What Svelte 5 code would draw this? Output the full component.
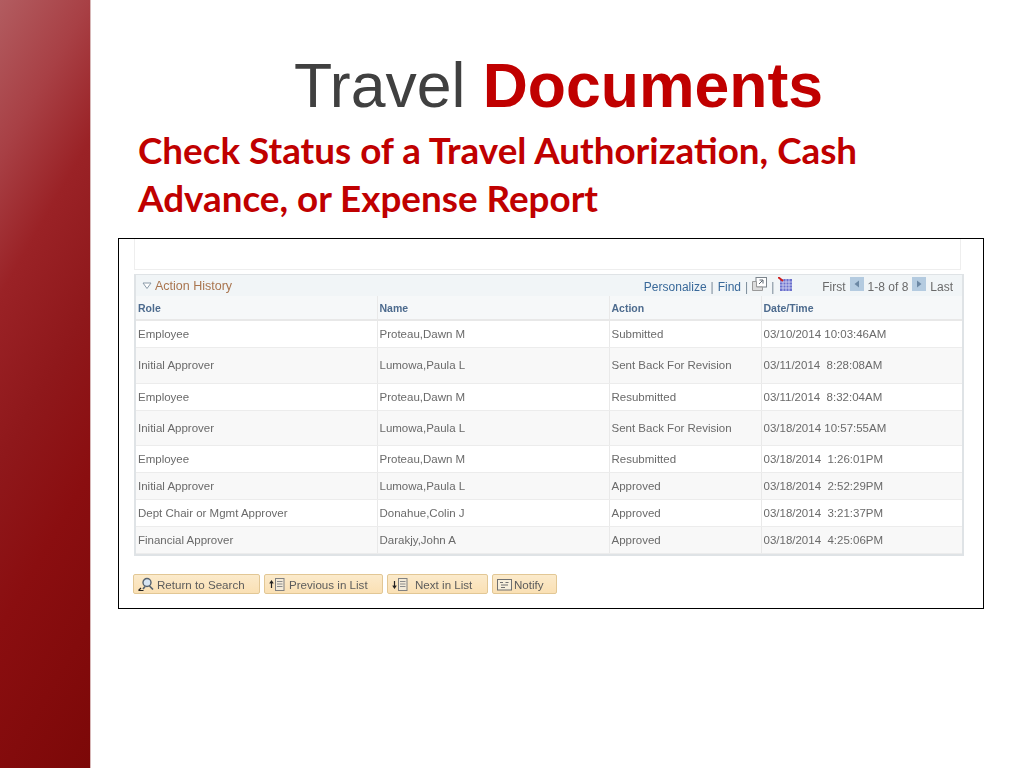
<script>
	const rows = [
		{ role: 'Employee', name: 'Proteau,Dawn M', action: 'Submitted', date: '03/10/2014 10:03:46AM', size: '' },
		{ role: 'Initial Approver', name: 'Lumowa,Paula L', action: 'Sent Back For Revision', date: '03/11/2014  8:28:08AM', size: 'tall' },
		{ role: 'Employee', name: 'Proteau,Dawn M', action: 'Resubmitted', date: '03/11/2014  8:32:04AM', size: '' },
		{ role: 'Initial Approver', name: 'Lumowa,Paula L', action: 'Sent Back For Revision', date: '03/18/2014 10:57:55AM', size: 'mid' },
		{ role: 'Employee', name: 'Proteau,Dawn M', action: 'Resubmitted', date: '03/18/2014  1:26:01PM', size: '' },
		{ role: 'Initial Approver', name: 'Lumowa,Paula L', action: 'Approved', date: '03/18/2014  2:52:29PM', size: '' },
		{ role: 'Dept Chair or Mgmt Approver', name: 'Donahue,Colin J', action: 'Approved', date: '03/18/2014  3:21:37PM', size: '' },
		{ role: 'Financial Approver', name: 'Darakjy,John A', action: 'Approved', date: '03/18/2014  4:25:06PM', size: '' }
	];
</script>

<div class="slide">
	<aside class="band"></aside>
	<main>
		<h1>Travel <strong>Documents</strong></h1>
		<h2>Check Status of a Travel Authorization, Cash Advance, or Expense Report</h2>

		<section class="shot">
			<div class="topbox"></div>

			<div class="grid">
				<div class="gridbar">
					<span class="gridtitle">
						<svg width="10" height="8" viewBox="0 0 10 8"><path d="M1 1h8L5 6.5z" fill="#fff" stroke="#8a9aa8" /></svg>
						Action History
					</span>
					<span class="links">
						<span class="blue">Personalize</span><span class="sep">|</span><span class="blue">Find</span><span class="sep">|</span>
						<svg class="lift" width="15" height="14" viewBox="0 0 15 14">
							<rect x="4" y="0.5" width="10.5" height="9.5" fill="#fff" stroke="#7c848c" />
							<path d="M0.5 4.5h4v5.5h6v3.5h-10z" fill="#dcdcdc" stroke="#9a9a9a" />
							<path d="M7 7l3.5-3.5M7.5 3h3.5v3.5" fill="none" stroke="#58626c" />
						</svg>
						<span class="sep">|</span>
						<svg class="lift" width="14" height="14" viewBox="0 0 14 14">
							<rect x="2" y="2" width="12" height="12" fill="#6a70cc" />
							<path d="M2 5h12M2 8h12M2 11h12M5 2v12M8 2v12M11 2v12" stroke="#dcdcf6" stroke-width=".8" />
							<path d="M0 0l5 4" stroke="#d02020" stroke-width="2" />
						</svg>
					</span>
					<span class="pager">
						<span>First</span>
						<svg class="lift" width="14" height="14" viewBox="0 0 14 14"><rect width="14" height="14" fill="#b4cbe0" /><path d="M9 3.5v7L4.5 7z" fill="#6c88a4" /></svg>
						<span>1-8 of 8</span>
						<svg class="lift" width="14" height="14" viewBox="0 0 14 14"><rect width="14" height="14" fill="#b4cbe0" /><path d="M5 3.5v7L9.5 7z" fill="#6c88a4" /></svg>
						<span>Last</span>
					</span>
				</div>

				<table>
					<colgroup>
						<col class="c1" />
						<col class="c2" />
						<col class="c3" />
						<col class="c4" />
					</colgroup>
					<thead>
						<tr>
							<th>Role</th>
							<th>Name</th>
							<th>Action</th>
							<th>Date/Time</th>
						</tr>
					</thead>
					<tbody>
						{#each rows as row, i}
							<tr class={row.size} class:alt={i % 2 === 1}>
								<td>{row.role}</td>
								<td>{row.name}</td>
								<td>{row.action}</td>
								<td>{row.date}</td>
							</tr>
						{/each}
					</tbody>
				</table>
			</div>

			<div class="buttons">
				<button class="b1">
					<svg width="17" height="15" viewBox="0 0 17 15">
						<circle cx="9" cy="5.5" r="4" fill="#d6e4f2" stroke="#56626e" stroke-width="1.4" />
						<path d="M7 9.5l-2 2.5M11.5 9l3.5 3.5" stroke="#56626e" stroke-width="1.7" />
						<path d="M0.5 13.5h5M0.5 13.5l2.5-2.5" stroke="#222" stroke-width="1.2" fill="none" />
					</svg>
					Return to Search
				</button>
				<button class="b2">
					<svg width="17" height="13" viewBox="0 0 17 13">
						<path d="M2.5 10V3.5M0.8 5.5l1.7-2.5 1.7 2.5" stroke="#222" stroke-width="1.2" fill="none" />
						<rect x="6.5" y="0.5" width="8.5" height="12" fill="#f3ead8" stroke="#808080" />
						<path d="M8 3.5h5.5M8 6h5.5M8 8.5h5.5" stroke="#8c8c8c" />
					</svg>
					Previous in List
				</button>
				<button class="b3">
					<svg width="17" height="13" viewBox="0 0 17 13">
						<path d="M2.5 3v6.5M0.8 7.5l1.7 2.5 1.7-2.5" stroke="#222" stroke-width="1.2" fill="none" />
						<rect x="6.5" y="0.5" width="8.5" height="12" fill="#f3ead8" stroke="#808080" />
						<path d="M8 3.5h5.5M8 6h5.5M8 8.5h5.5" stroke="#8c8c8c" />
					</svg>
					Next in List
				</button>
				<button class="b4">
					<svg width="15" height="13" viewBox="0 0 15 13">
						<rect x="0.5" y="1.5" width="14" height="10.5" fill="#f8f0dc" stroke="#707070" />
						<path d="M3 4.5h3M8.5 4.5h3M4 7h7M4 9.5h4" stroke="#707070" />
					</svg>
					Notify
				</button>
			</div>
		</section>
	</main>
</div>

<style>
	:global(body) {
		background: #fff;
	}

	.slide {
		display: flex;
		width: 1024px;
		height: 768px;
		overflow: hidden;
		background: #fff;
	}

	.band {
		flex: 0 0 90px;
		border-right: 1px solid #d8b8b8;
		background: linear-gradient(120deg, #b25c60 0%, #a84045 17%, #9a2226 32%, #8f181b 50%, #8a0e10 68%, #7c0808 100%);
	}

	main {
		flex: 1;
		min-width: 0;
		padding: 0 40px 0 27px;
	}

	h1 {
		margin: 50px 0 0 176px;
		font: 400 62.5px/70px "Liberation Sans", Arial, sans-serif;
		color: #404040;
		white-space: nowrap;
	}

	h1 strong {
		font-weight: 700;
		color: #c00000;
	}

	h2 {
		margin: 6px 0 0 20px;
		width: 780px;
		font: 700 36.8px/48px Lato, "Liberation Sans", sans-serif;
		color: #c00000;
	}

	.shot {
		box-sizing: border-box;
		width: 866px;
		height: 371px;
		margin: 16px 0 0 0;
		border: 1px solid #000;
		padding: 0 19px 0 15px;
		font-family: "Liberation Sans", Arial, sans-serif;
		font-size: 11.5px;
		color: #6a6a6a;
	}

	.topbox,
	.grid,
	.buttons {
		filter: blur(0.35px);
	}

	.topbox {
		height: 30px;
		width: 825px;
		border: 1px solid #eeeeee;
		border-top: 0;
	}

	.grid {
		margin-top: 4px;
		border: 2px solid #dfe3e6;
		border-top-width: 1px;
	}

	.gridbar {
		display: flex;
		align-items: center;
		height: 21px;
		padding: 0 9px 0 6px;
		background: #f1f5f7;
		font-size: 12px;
	}

	.gridtitle {
		display: flex;
		align-items: center;
		gap: 3px;
		font-size: 12.5px;
		color: #a9754f;
	}

	.links {
		display: flex;
		align-items: center;
		gap: 4px;
		margin-left: auto;
		padding-top: 2px;
	}

	.lift {
		position: relative;
		top: -3px;
	}

	.blue {
		color: #39699a;
	}

	.sep {
		color: #7a8a98;
	}

	.pager {
		display: flex;
		align-items: center;
		gap: 4px;
		margin-left: 30px;
		padding-top: 2px;
	}

	table {
		width: 100%;
		border-collapse: collapse;
		table-layout: fixed;
	}

	.c1 {
		width: 241px;
	}

	.c2 {
		width: 232px;
	}

	.c3 {
		width: 152px;
	}

	th {
		height: 24px;
		padding: 0 2px;
		box-sizing: border-box;
		text-align: left;
		font-size: 10.5px;
		font-weight: 700;
		color: #4d6b8e;
		background: #f6f8f9;
		border-right: 1px solid #e9e9e9;
		border-bottom: 2px solid #e8e8e8;
	}

	td {
		height: 27px;
		padding: 0 2px;
		box-sizing: border-box;
		border-right: 1px solid #e9e9e9;
		border-bottom: 1px solid #ececec;
		white-space: pre;
		background: #fff;
	}

	th:last-child,
	td:last-child {
		border-right: 0;
	}

	tr.alt td {
		background: #f8f8f8;
	}

	tr.tall td {
		height: 36px;
	}

	tr.mid td {
		height: 35px;
	}

	.buttons {
		display: flex;
		gap: 4px;
		margin-top: 18px;
		margin-left: -1px;
	}

	button {
		display: flex;
		align-items: center;
		gap: 2px;
		box-sizing: border-box;
		height: 20px;
		padding: 2px 0 0 4px;
		border: 1px solid #e2c795;
		border-radius: 2px;
		background: linear-gradient(#fbeacb, #fae0b4);
		font: 11.6px "Liberation Sans", Arial, sans-serif;
		color: #5c5c5c;
	}

	.b1 {
		width: 127px;
	}

	.b2 {
		width: 119px;
		gap: 3px;
	}

	.b3 {
		width: 101px;
		gap: 6px;
	}

	.b4 {
		width: 65px;
	}
</style>
